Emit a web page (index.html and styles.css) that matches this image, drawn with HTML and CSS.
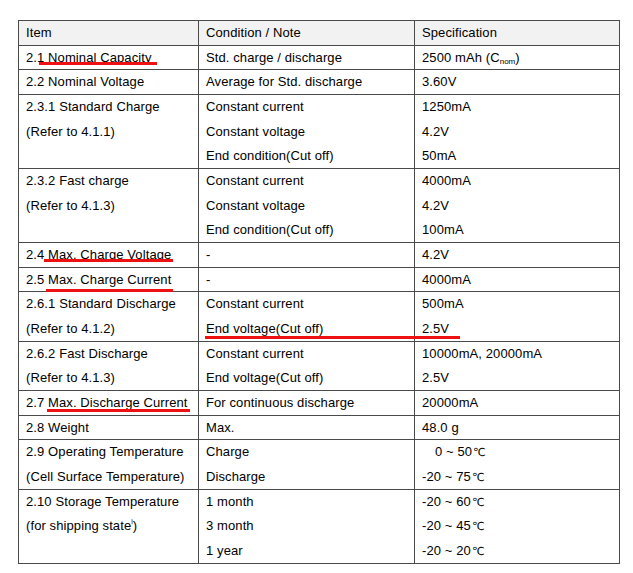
FILE: index.html
```html
<!DOCTYPE html>
<html>
<head>
<meta charset="utf-8">
<link rel="stylesheet" href="styles.css">
</head>
<body>
<div class="sheet">
  <table class="spec">
    <colgroup><col class="c1"><col class="c2"><col class="c3"></colgroup>
    <thead>
      <tr class="head">
        <td><div class="ln">Item</div></td>
        <td><div class="ln">Condition / Note</div></td>
        <td><div class="ln">Specification</div></td>
      </tr>
    </thead>
    <tbody>
      <tr>
        <td><div class="ln">2.1 Nominal Capacity</div></td>
        <td><div class="ln">Std. charge / discharge</div></td>
        <td><div class="ln">2500 mAh (C<sub>nom</sub>)</div></td>
      </tr>
      <tr>
        <td><div class="ln">2.2 Nominal Voltage</div></td>
        <td><div class="ln">Average for Std. discharge</div></td>
        <td><div class="ln">3.60V</div></td>
      </tr>
      <tr>
        <td><div class="ln">2.3.1 Standard Charge</div><div class="ln">(Refer to 4.1.1)</div></td>
        <td><div class="ln">Constant current</div><div class="ln">Constant voltage</div><div class="ln">End condition(Cut off)</div></td>
        <td><div class="ln">1250mA</div><div class="ln">4.2V</div><div class="ln">50mA</div></td>
      </tr>
      <tr>
        <td><div class="ln">2.3.2 Fast charge</div><div class="ln">(Refer to 4.1.3)</div></td>
        <td><div class="ln">Constant current</div><div class="ln">Constant voltage</div><div class="ln">End condition(Cut off)</div></td>
        <td><div class="ln">4000mA</div><div class="ln">4.2V</div><div class="ln">100mA</div></td>
      </tr>
      <tr>
        <td><div class="ln">2.4 Max. Charge Voltage</div></td>
        <td><div class="ln">-</div></td>
        <td><div class="ln">4.2V</div></td>
      </tr>
      <tr>
        <td><div class="ln">2.5 Max. Charge Current</div></td>
        <td><div class="ln">-</div></td>
        <td><div class="ln">4000mA</div></td>
      </tr>
      <tr>
        <td><div class="ln">2.6.1 Standard Discharge</div><div class="ln">(Refer to 4.1.2)</div></td>
        <td><div class="ln">Constant current</div><div class="ln">End voltage(Cut off)</div></td>
        <td><div class="ln">500mA</div><div class="ln">2.5V</div></td>
      </tr>
      <tr>
        <td><div class="ln">2.6.2 Fast Discharge</div><div class="ln">(Refer to 4.1.3)</div></td>
        <td><div class="ln">Constant current</div><div class="ln">End voltage(Cut off)</div></td>
        <td><div class="ln">10000mA, 20000mA</div><div class="ln">2.5V</div></td>
      </tr>
      <tr>
        <td><div class="ln">2.7 Max. Discharge Current</div></td>
        <td><div class="ln">For continuous discharge</div></td>
        <td><div class="ln">20000mA</div></td>
      </tr>
      <tr>
        <td><div class="ln">2.8 Weight</div></td>
        <td><div class="ln">Max.</div></td>
        <td><div class="ln">48.0 g</div></td>
      </tr>
      <tr>
        <td><div class="ln">2.9 Operating Temperature</div><div class="ln">(Cell Surface Temperature)</div></td>
        <td><div class="ln">Charge</div><div class="ln">Discharge</div></td>
        <td><div class="ln indent">0 ~ 50<span class="deg">℃</span></div><div class="ln">-20 ~ 75<span class="deg">℃</span></div></td>
      </tr>
      <tr>
        <td><div class="ln">2.10 Storage Temperature</div><div class="ln">(for shipping state<sup>i</sup>)</div></td>
        <td><div class="ln">1 month</div><div class="ln">3 month</div><div class="ln">1 year</div></td>
        <td><div class="ln">-20 ~ 60<span class="deg">℃</span></div><div class="ln">-20 ~ 45<span class="deg">℃</span></div><div class="ln">-20 ~ 20<span class="deg">℃</span></div></td>
      </tr>
    </tbody>
  </table>
  <div class="mark m1"></div>
  <div class="mark m2"></div>
  <div class="mark m3"></div>
  <div class="mark m4"></div>
  <div class="mark m5"></div>
</div>
</body>
</html>
```
FILE: styles.css
```css
html, body {
  margin: 0;
  padding: 0;
  background: #ffffff;
}
.sheet {
  position: relative;
  width: 633px;
  height: 573px;
  padding: 20px 0 0 18px;
  box-sizing: border-box;
  font-family: "Liberation Sans", Arial, sans-serif;
  font-size: 13px;
  letter-spacing: 0.1px;
  color: #000000;
}
.spec {
  border-collapse: collapse;
  table-layout: fixed;
  width: 601px;
}
.c1 { width: 180px; }
.c2 { width: 216px; }
.c3 { width: 205px; }
.spec td {
  border: 1px solid #4a4a4a;
  padding: 0 6px 0 7px;
  vertical-align: top;
  white-space: nowrap;
}
.head td {
  background: #f2f2f2;
}
.ln {
  height: 24.68px;
  line-height: 24.68px;
}
.ln:last-child {
  margin-bottom: -1px;
}
.indent {
  padding-left: 13px;
}
.deg {
  font-family: "DejaVu Sans", sans-serif;
  font-size: 11px;
  letter-spacing: -0.5px;
  margin-left: 1px;
}
sub {
  font-size: 8px;
  vertical-align: -2px;
  line-height: 0;
  letter-spacing: 0;
}
sup {
  font-size: 7px;
  vertical-align: 6px;
  line-height: 0;
  letter-spacing: 0;
}
.mark {
  position: absolute;
  height: 3px;
  background: #ee1111;
}
.m1 { left: 39px; top: 62px; width: 118px; }
.m2 { left: 44px; top: 259px; width: 129px; }
.m3 { left: 46px; top: 289px; width: 127px; }
.m4 { left: 205px; top: 336px; width: 255px; }
.m5 { left: 47px; top: 409px; width: 143px; }
```
